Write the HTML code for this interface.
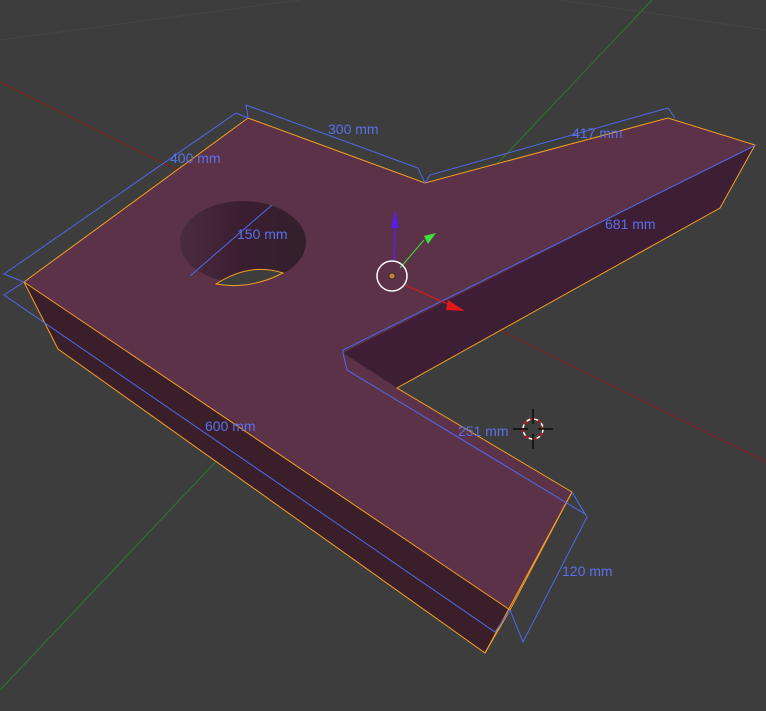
<!DOCTYPE html>
<html><head><style>
html,body{margin:0;padding:0;background:#3d3d3d;width:766px;height:711px;overflow:hidden}
svg{display:block}
text{font-family:"Liberation Sans","DejaVu Sans",sans-serif;font-size:14px;fill:#5a70e8}
</style></head><body>
<svg width="766" height="711" viewBox="0 0 766 711">
<defs>
<linearGradient id="h" x1="0" y1="0" x2="1" y2="0">
<stop offset="0" stop-color="#4a2c3f"/><stop offset="0.5" stop-color="#3a1e30"/><stop offset="1" stop-color="#33202b"/>
</linearGradient>
</defs>
<rect width="766" height="711" fill="#3d3d3d"/>
<g stroke="#454545" stroke-width="1">
<line x1="560" y1="0" x2="766" y2="30"/>
<line x1="0" y1="40" x2="300" y2="0"/>
</g>
<line x1="0" y1="82" x2="766" y2="462" stroke="#8a1c1c" stroke-width="1"/>
<line x1="652" y1="0" x2="0" y2="690" stroke="#2a7a2a" stroke-width="1"/>
<polygon points="24,282 510,610 485,653 58,349" fill="#3a1f2a"/>
<polygon points="510,610 572,492 485,653" fill="#3a1f2a"/>
<polygon points="343,353 755,145 720,208 397,388" fill="#3e1e35"/>
<polygon points="248,118 425,183 668,118 755,145 343,353 397,388 572,492 510,610 24,282" fill="#5c3249"/>
<ellipse cx="243" cy="242" rx="63" ry="41" fill="url(#h)"/>
<path d="M216,284 Q250,262 283,273 Q250,290 216,284Z" fill="#3d3d3d" stroke="#f0a020" stroke-width="1"/>
<g fill="none" stroke="#f0a020" stroke-width="1">
<polyline points="24,282 248,118 425,183 668,118 755,145 720,208 397,388 572,492 510,610 24,282"/>
<polyline points="24,282 58,349 485,653 510,610"/>
<line x1="572" y1="492" x2="485" y2="653"/>
</g>
<g fill="none" stroke="#5068e8" stroke-width="1">
<polyline points="24,282 4,274 236,113 248,118"/>
<polyline points="248,118 246,105 418,168 425,183"/>
<polyline points="425,183 430,175 668,108 675,118"/>
<polyline points="24,282 4,295 495,632 510,610"/>
<polyline points="343,353 343,350 750,148 755,145"/>
<polyline points="343,353 347,370 585,514 572,492"/>
<polyline points="572,492 587,517 523,642 510,610"/>
<line x1="190" y1="276" x2="272" y2="205"/>
</g>
<text x="170" y="163">400 mm</text>
<text x="328" y="134">300 mm</text>
<text x="572" y="138">417 mm</text>
<text x="605" y="229">681 mm</text>
<text x="237" y="239">150 mm</text>
<text x="205" y="431">600 mm</text>
<text x="458" y="436">251 mm</text>
<text x="562" y="576">120 mm</text>
<line x1="394" y1="262" x2="395" y2="225" stroke="#5a1ee0" stroke-width="1.5"/>
<polygon points="395,210 391,228 399,228" fill="#5a1ee0"/>
<line x1="400" y1="268" x2="424" y2="240" stroke="#3ee03e" stroke-width="1"/>
<polygon points="436,233 424,236 428,244" fill="#3ee03e"/>
<line x1="405" y1="285" x2="450" y2="305" stroke="#e01818" stroke-width="1"/>
<polygon points="465,311 448,300 446,310" fill="#e01818"/>
<circle cx="392" cy="276" r="15" fill="none" stroke="#fff" stroke-width="1.5"/>
<circle cx="392" cy="276" r="3" fill="#c88030" stroke="#222" stroke-width="0.7"/>
<circle cx="533" cy="429" r="10" fill="none" stroke="#fff" stroke-width="1.5" stroke-dasharray="4 4"/>
<circle cx="533" cy="429" r="10" fill="none" stroke="#e01010" stroke-width="1.5" stroke-dasharray="4 4" stroke-dashoffset="4"/>
<g stroke="#000" stroke-width="1.2">
<line x1="513" y1="429" x2="528" y2="429"/><line x1="538" y1="429" x2="553" y2="429"/>
<line x1="533" y1="409" x2="533" y2="424"/><line x1="533" y1="434" x2="533" y2="449"/>
</g>
</svg>
</body></html>
